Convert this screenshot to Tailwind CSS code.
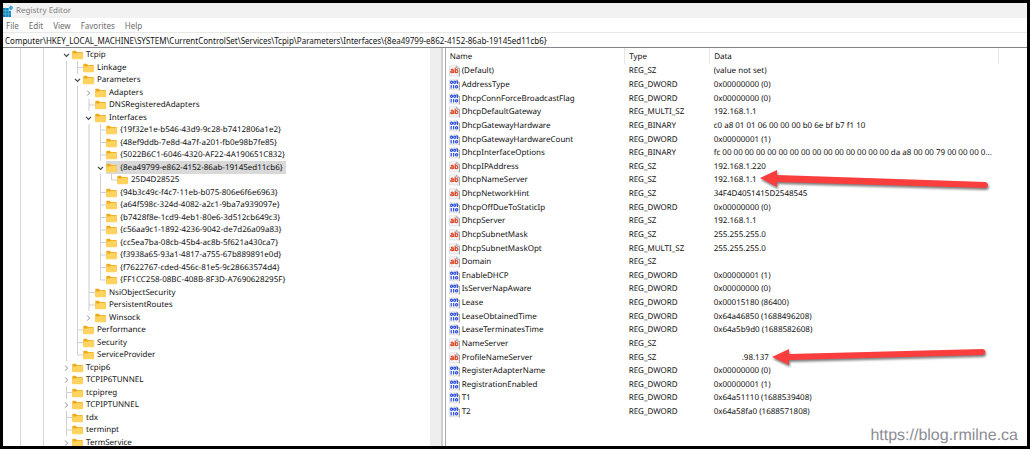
<!DOCTYPE html>
<html lang="en">
<head>
<meta charset="utf-8">
<meta name="viewport" content="width=device-width, initial-scale=1">
<title>Registry Editor</title>
<script src="https://cdn.jsdelivr.net/npm/@tailwindcss/browser@4"></script>
</head>
<body class="bg-black font-['Noto_Sans','Open_Sans',sans-serif] text-[8px] leading-3 text-[#111] [text-rendering:geometricPrecision]">
<svg class="hidden" aria-hidden="true">
  <symbol id="folder" viewBox="0 0 11 10">
    <path d="M0.3 1.6Q0.3 0.8 1.1 0.8H3.7L5 2H10Q10.8 2 10.8 2.8V8.4H0.3Z" fill="#eeaa1c"/>
    <path d="M0.3 3.5H4.2L5.2 2.8H10.8V8.6Q10.8 9.2 10 9.2H1.1Q0.3 9.2 0.3 8.6Z" fill="#ffd35e"/>
  </symbol>
  <symbol id="down" viewBox="0 0 11 12"><path d="M3 4.8 5.5 7.3 8 4.8" fill="none" stroke="#444" stroke-width="1.2"/></symbol>
  <symbol id="right" viewBox="0 0 11 12"><path d="M4.2 3.6 6.6 6.1 4.2 8.6" fill="none" stroke="#909090"/></symbol>
  <symbol id="page" viewBox="0 0 11 12">
    <path d="M0.5 0.8H7.8L10.4 3.2V11.3L7.6 10.5 5.6 11.2 3 10.5 0.5 11.1Z" fill="#f5f5f7" stroke="#d0d0d4" stroke-width="0.6"/>
    <path d="M7.8 0.8V3.2H10.4V11.3" fill="none" stroke="#8d8d92" stroke-width="0.8"/>
  </symbol>
  <symbol id="sz" viewBox="0 0 11 12">
    <use href="#page"/>
    <g fill="none" stroke="#dc4a2c" stroke-width="1.2">
      <path d="M1.8 4.6Q4.3 3.4 4.3 5.4V8M4.3 6Q1.7 5.8 1.7 7.1 2 8.3 4.3 7.2M6.2 2.4V8"/><ellipse cx="7.5" cy="6.2" rx="1.3" ry="1.5"/>
    </g>
  </symbol>
  <symbol id="bin" viewBox="0 0 11 12">
    <use href="#page"/>
    <g fill="none" stroke="#2f52e0" stroke-width="1.2">
      <ellipse cx="2.6" cy="3.3" rx="1" ry="1.2"/><ellipse cx="5.7" cy="3.3" rx="1" ry="1.2"/><path d="M8.4 1.5V5M2.2 6V9.6M4.6 6V9.6"/>
      <ellipse cx="7.6" cy="7.8" rx="1.1" ry="1.2"/>
    </g>
  </symbol>
</svg>

<div class="relative flex h-screen flex-col p-[3px]">
  <main class="flex min-h-0 flex-1 flex-col overflow-hidden bg-white">
    <header class="flex h-[15px] shrink-0 items-center gap-[3px] bg-[#f2f2f2] text-[#808080]">
      <svg class="h-3 w-[10px]" viewBox="0 0 10 12" aria-hidden="true">
        <path d="M0 3H6V6H8V12H0Z" fill="#1583b8"/>
        <path d="M0 5.8H8M0 8.9H8M2.6 3V12M5.4 3V12" stroke="#69c4e8" stroke-width="0.6"/>
        <path d="M7.5 0.5 10 2 9.4 4.6 7 5 5.8 2.8Z" fill="#35a8dc"/>
      </svg>
      <h1>Registry Editor</h1>
    </header>
    <nav class="flex h-[14px] shrink-0 items-center gap-[10px] px-[3px] pt-px text-[#6c6c6c]">
      <button>File</button><button>Edit</button><button>View</button><button>Favorites</button><button>Help</button>
    </nav>
    <input aria-label="Address" class="h-4 w-full shrink-0 border-t border-b border-t-[#e8e8e8] border-b-[#85858b] px-[2px] outline-none" value="Computer\HKEY_LOCAL_MACHINE\SYSTEM\CurrentControlSet\Services\Tcpip\Parameters\Interfaces\{8ea49799-e862-4152-86ab-19145ed11cb6}">
    <div class="flex min-h-0 flex-1">
      <section class="flex w-5/12 shrink-0 overflow-hidden" aria-label="Keys">
        <div class="ml-[17px] w-6 shrink-0 border-x border-[#d8d8d8]"></div>
        <ul id="tree" class="min-w-0 flex-1 pt-px pl-[17px]"></ul>
      </section>
      <div class="flex flex-1 min-w-0">
        <div class="w-[11px] shrink-0 bg-[#eeeeee]"></div>
        <div class="w-[5px] shrink-0 border-r border-l-2 border-l-[#cdcdd2] border-r-[#a8a8ae]"></div>
        <section class="min-w-0 flex-1 overflow-hidden" aria-label="Values">
          <table class="w-full table-fixed border-collapse">
            <colgroup><col class="w-[179px]"><col class="w-[85px]"><col class="w-[289px]"><col></colgroup>
            <thead>
              <tr class="h-4 text-left *:border-r *:border-[#e5e5e5] *:p-0 *:pt-px *:pl-1 *:font-normal">
                <th>Name</th><th>Type</th><th>Data</th><td class="border-r-0!"></td>
              </tr>
            </thead>
            <tbody id="values"></tbody>
          </table>
        </section>
      </div>
    </div>
  </main>

  <svg class="absolute top-[165px] right-[38px] h-8 w-[232px] drop-shadow-[1px_2px_1px_#00000080]" viewBox="0 0 232 32" aria-hidden="true">
    <path d="M0 13 17 5V10L226 17Q230 20 226 23L17 17V22Z" fill="#fa3e3e"/>
  </svg>
  <svg class="absolute top-[340px] right-[40px] h-8 w-[218px] drop-shadow-[1px_2px_1px_#00000080]" viewBox="0 0 218 32" aria-hidden="true">
    <path d="M0 17 17 9V14L211 9Q216 11 211 15L17 20V25Z" fill="#fa3e3e"/>
  </svg>
  <a href="https://blog.rmilne.ca" class="absolute right-3 bottom-[3px] font-['Liberation_Sans',sans-serif] text-base leading-5 text-[#8c8c94]">https://blog.rmilne.ca</a>
</div>

<script>
// Each tree entry: one guide symbol per level, then the key name.
const keys = [
  ['v', 'Tcpip'], ['|T', 'Linkage'], ['|v', 'Parameters'], ['||>', 'Adapters'],
  ['||T', 'DNSRegisteredAdapters'], ['||v', 'Interfaces'],
  ['|||T', '{19f32e1e-b546-43d9-9c28-b7412806a1e2}'],
  ['|||T', '{48ef9ddb-7e8d-4a7f-a201-fb0e98b7fe85}'],
  ['|||T', '{5022B6C1-6046-4320-AF22-4A190651C832}'],
  ['|||v', '{8ea49799-e862-4152-86ab-19145ed11cb6}', true],
  ['||||L', '25D4D28525'],
  ['|||T', '{94b3c49c-f4c7-11eb-b075-806e6f6e6963}'],
  ['|||T', '{a64f598c-324d-4082-a2c1-9ba7a939097e}'],
  ['|||T', '{b7428f8e-1cd9-4eb1-80e6-3d512cb649c3}'],
  ['|||T', '{c56aa9c1-1892-4236-9042-de7d26a09a83}'],
  ['|||T', '{cc5ea7ba-08cb-45b4-ac8b-5f621a430ca7}'],
  ['|||T', '{f3938a65-93a1-4817-a755-67b889891e0d}'],
  ['|||T', '{f7622767-cded-456c-81e5-9c28663574d4}'],
  ['|||L', '{FF1CC258-08BC-408B-8F3D-A7690628295F}'],
  ['||T', 'NsiObjectSecurity'], ['||T', 'PersistentRoutes'], ['||>', 'Winsock'],
  ['|T', 'Performance'], ['|T', 'Security'], ['|L', 'ServiceProvider'],
  ['>', 'Tcpip6'], ['>', 'TCPIP6TUNNEL'], ['T', 'tcpipreg'], ['>', 'TCPIPTUNNEL'],
  ['T', 'tdx'], ['T', 'terminpt'], ['>', 'TermService'],
];
const line = d => `<svg class="size-full" viewBox="0 0 11 13" preserveAspectRatio="none"><path d="${d}" fill="none" stroke="#cfcfcf"/></svg>`;
const guides = {
  '|': line('M5.5 0V13'),
  'T': line('M5.5 0V13M5.5 6.5H11'),
  'L': line('M5.5 0V6.5H11'),
  'v': '<svg class="h-3 w-[11px]"><use href="#down"/></svg>',
  '>': '<svg class="h-3 w-[11px]"><use href="#right"/></svg>',
};
document.getElementById('tree').innerHTML = keys.map(([g, name, selected]) => `
  <li class="flex items-center whitespace-nowrap odd:h-3 even:h-[13px]">
    ${[...g].map((c, i) => `<span class="flex h-full shrink-0 items-center ${i === 2 ? 'w-3' : 'w-[11px]'}">${guides[c]}</span>`).join('')}
    <span class="flex h-full items-center gap-[3px] pr-[3px] ${selected ? 'bg-[#d9d9d9]' : ''}"><svg class="h-[10px] w-[11px]" aria-hidden="true"><use href="#folder"/></svg>${name}</span>
  </li>`).join('');

const values = [
  ['(Default)', 'REG_SZ', '(value not set)'],
  ['AddressType', 'REG_DWORD', '0x00000000 (0)'],
  ['DhcpConnForceBroadcastFlag', 'REG_DWORD', '0x00000000 (0)'],
  ['DhcpDefaultGateway', 'REG_MULTI_SZ', '192.168.1.1'],
  ['DhcpGatewayHardware', 'REG_BINARY', 'c0 a8 01 01 06 00 00 00 b0 6e bf b7 f1 10'],
  ['DhcpGatewayHardwareCount', 'REG_DWORD', '0x00000001 (1)'],
  ['DhcpInterfaceOptions', 'REG_BINARY', 'fc 00 00 00 00 00 00 00 00 00 00 00 00 00 00 00 da a8 00 00 79 00 00 00 0...'],
  ['DhcpIPAddress', 'REG_SZ', '192.168.1.220'],
  ['DhcpNameServer', 'REG_SZ', '192.168.1.1'],
  ['DhcpNetworkHint', 'REG_SZ', '34F4D4051415D2548545'],
  ['DhcpOffDueToStaticIp', 'REG_DWORD', '0x00000000 (0)'],
  ['DhcpServer', 'REG_SZ', '192.168.1.1'],
  ['DhcpSubnetMask', 'REG_SZ', '255.255.255.0'],
  ['DhcpSubnetMaskOpt', 'REG_MULTI_SZ', '255.255.255.0'],
  ['Domain', 'REG_SZ', ''],
  ['EnableDHCP', 'REG_DWORD', '0x00000001 (1)'],
  ['IsServerNapAware', 'REG_DWORD', '0x00000000 (0)'],
  ['Lease', 'REG_DWORD', '0x00015180 (86400)'],
  ['LeaseObtainedTime', 'REG_DWORD', '0x64a46850 (1688496208)'],
  ['LeaseTerminatesTime', 'REG_DWORD', '0x64a5b9d0 (1688582608)'],
  ['NameServer', 'REG_SZ', ''],
  ['ProfileNameServer', 'REG_SZ', '<span class="pl-7">.98.137</span>'],
  ['RegisterAdapterName', 'REG_DWORD', '0x00000000 (0)'],
  ['RegistrationEnabled', 'REG_DWORD', '0x00000001 (1)'],
  ['T1', 'REG_DWORD', '0x64a51110 (1688539408)'],
  ['T2', 'REG_DWORD', '0x64a58fa0 (1688571808)'],
];
document.getElementById('values').innerHTML = values.map(([name, type, data]) => `
  <tr class="h-[14px] whitespace-nowrap nth-[8n]:h-[13px] nth-[8n+3]:h-[13px] nth-[8n+6]:h-[13px] *:p-0">
    <td class="pl-[3px]!"><span class="flex items-center gap-[2px]"><svg class="h-3 w-[11px]" aria-hidden="true"><use href="${type.endsWith('SZ') ? '#sz' : '#bin'}"/></svg>${name}</span></td>
    <td class="pl-1!">${type}</td>
    <td class="pl-1!">${data}</td>
  </tr>`).join('');
</script>
</body>
</html>
